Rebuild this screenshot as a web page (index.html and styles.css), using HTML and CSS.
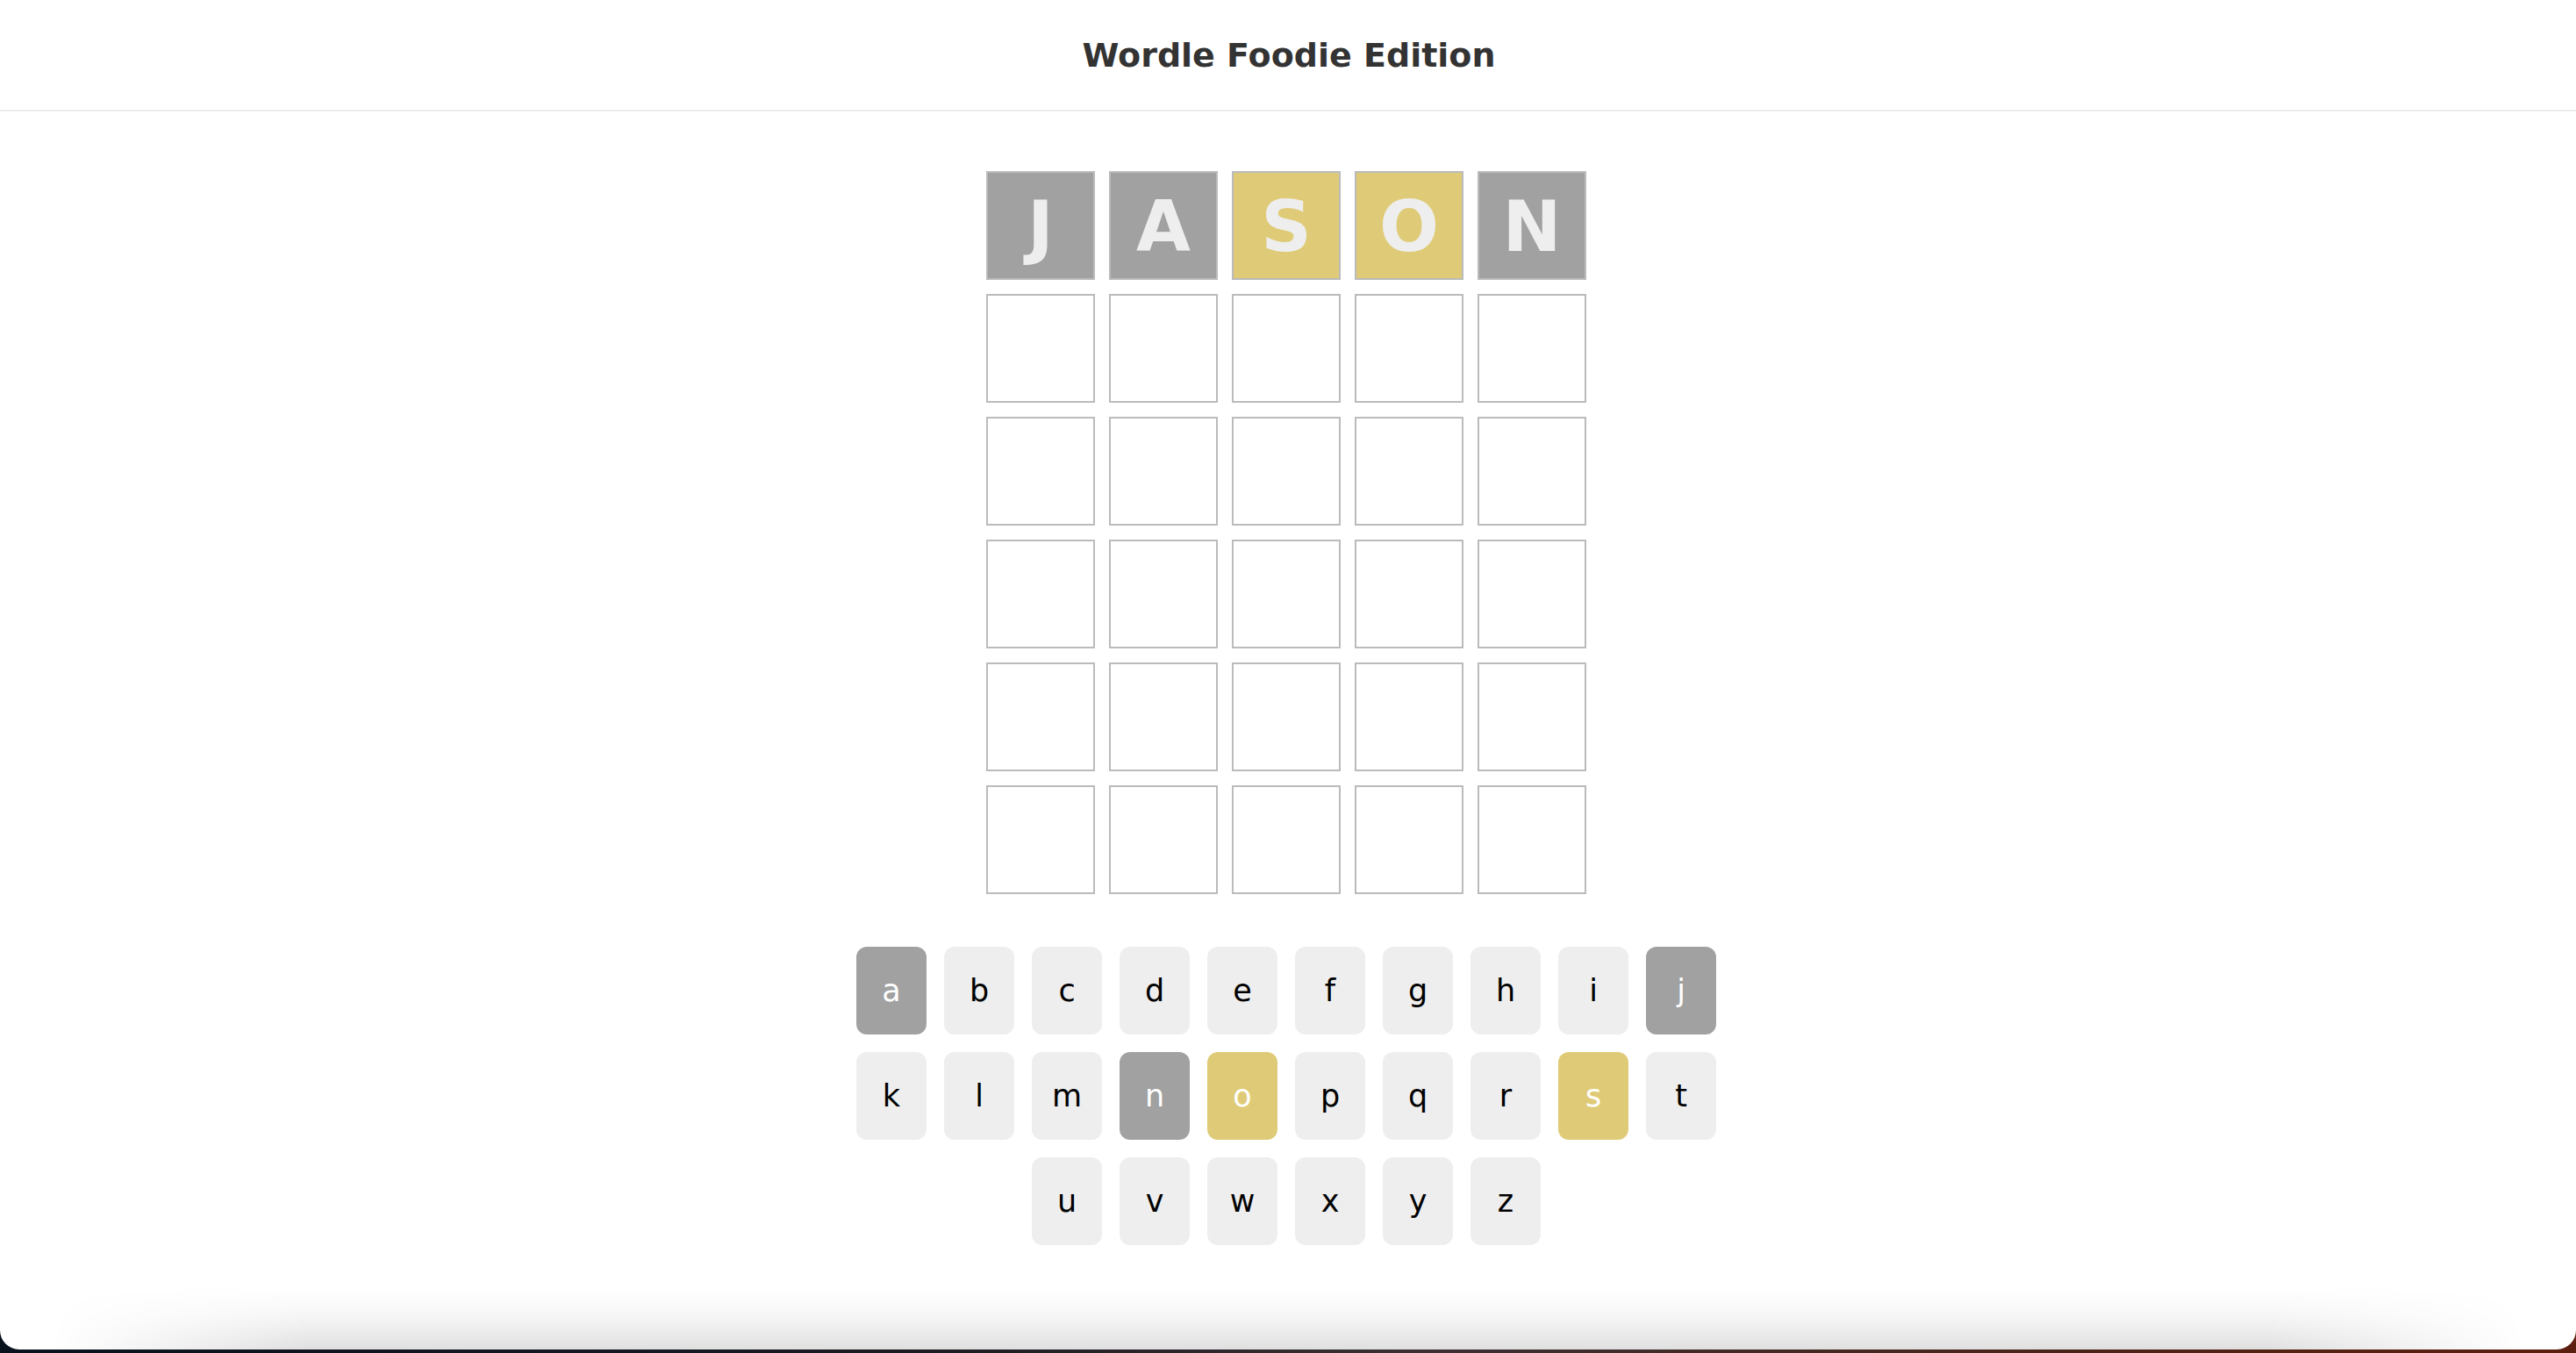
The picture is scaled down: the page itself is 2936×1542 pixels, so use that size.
FILE: index.html
```html
<!DOCTYPE html>
<html lang="en">
<head>
<meta charset="utf-8">
<title>Wordle Foodie Edition</title>
<link rel="stylesheet" href="styles.css">
</head>
<body>
<div class="window">
  <header class="header">
    <h1 class="title">Wordle Foodie Edition</h1>
  </header>
  <main class="game">
    <div class="board">
      <div class="row">
        <div class="tile absent">J</div>
        <div class="tile absent">A</div>
        <div class="tile present">S</div>
        <div class="tile present">O</div>
        <div class="tile absent">N</div>
      </div>
      <div class="row"><div class="tile"></div><div class="tile"></div><div class="tile"></div><div class="tile"></div><div class="tile"></div></div>
      <div class="row"><div class="tile"></div><div class="tile"></div><div class="tile"></div><div class="tile"></div><div class="tile"></div></div>
      <div class="row"><div class="tile"></div><div class="tile"></div><div class="tile"></div><div class="tile"></div><div class="tile"></div></div>
      <div class="row"><div class="tile"></div><div class="tile"></div><div class="tile"></div><div class="tile"></div><div class="tile"></div></div>
      <div class="row"><div class="tile"></div><div class="tile"></div><div class="tile"></div><div class="tile"></div><div class="tile"></div></div>
    </div>
    <div class="keyboard">
      <div class="key-row">
        <div class="key absent">a</div>
        <div class="key">b</div>
        <div class="key">c</div>
        <div class="key">d</div>
        <div class="key">e</div>
        <div class="key">f</div>
        <div class="key">g</div>
        <div class="key">h</div>
        <div class="key">i</div>
        <div class="key absent">j</div>
      </div>
      <div class="key-row">
        <div class="key">k</div>
        <div class="key">l</div>
        <div class="key">m</div>
        <div class="key absent">n</div>
        <div class="key present">o</div>
        <div class="key">p</div>
        <div class="key">q</div>
        <div class="key">r</div>
        <div class="key present">s</div>
        <div class="key">t</div>
      </div>
      <div class="key-row">
        <div class="key">u</div>
        <div class="key">v</div>
        <div class="key">w</div>
        <div class="key">x</div>
        <div class="key">y</div>
        <div class="key">z</div>
      </div>
    </div>
  </main>
  <div class="window-shade"></div>
</div>
</body>
</html>
```

FILE: styles.css
```css
html, body {
  margin: 0;
  padding: 0;
  height: 100%;
}

body {
  background: linear-gradient(90deg, #08121c 0%, #1a1a22 35%, #3a3034 55%, #4a2418 80%, #5c1e0e 100%);
  font-family: "DejaVu Sans", Verdana, sans-serif;
  overflow: hidden;
}

.window {
  position: relative;
  height: 1538px;
  background: #ffffff;
  border-radius: 0 0 22px 22px;
  overflow: hidden;
  display: flex;
  flex-direction: column;
}

.header {
  height: 125px;
  border-bottom: 2px solid #ececec;
  display: flex;
  align-items: center;
  justify-content: center;
  flex-shrink: 0;
}

.title {
  margin: 0;
  font-size: 38px;
  font-weight: bold;
  color: #333333;
  letter-spacing: 0;
  padding-left: 2px;
}

.game {
  display: flex;
  flex-direction: column;
  align-items: center;
  padding-top: 68px;
  padding-right: 4px;
}

.board {
  display: flex;
  flex-direction: column;
  gap: 16px;
}

.row {
  display: flex;
  gap: 16px;
}

.tile {
  box-sizing: border-box;
  width: 124px;
  height: 124px;
  border: 2px solid #bbbbbb;
  background: #ffffff;
  display: flex;
  align-items: center;
  justify-content: center;
  font-size: 80px;
  font-weight: bold;
  color: #eeeeee;
  line-height: 1;
  padding-top: 4px;
}

.tile.absent {
  background: #a1a1a1;
}

.tile.present {
  background: #dfcb77;
}

.keyboard {
  margin-top: 60px;
  display: flex;
  flex-direction: column;
  align-items: center;
  gap: 20px;
}

.key-row {
  display: flex;
  gap: 20px;
}

.key {
  width: 80px;
  height: 100px;
  border-radius: 12px;
  background: #eeeeee;
  color: #000000;
  display: flex;
  align-items: center;
  justify-content: center;
  font-size: 35px;
  line-height: 1;
}

.key.absent {
  background: #a1a1a1;
  color: #ffffff;
}

.key.present {
  background: #dfcb77;
  color: #ffffff;
}

.window-shade {
  position: absolute;
  left: 0;
  right: 0;
  bottom: 0;
  height: 70px;
  background: linear-gradient(180deg, rgba(255,255,255,0) 0%, rgba(0,0,0,0.035) 45%, rgba(0,0,0,0.12) 100%);
  -webkit-mask-image: linear-gradient(90deg, transparent 2%, #000 12%, #000 88%, transparent 98%);
  mask-image: linear-gradient(90deg, transparent 2%, #000 12%, #000 88%, transparent 98%);
  pointer-events: none;
}
```
